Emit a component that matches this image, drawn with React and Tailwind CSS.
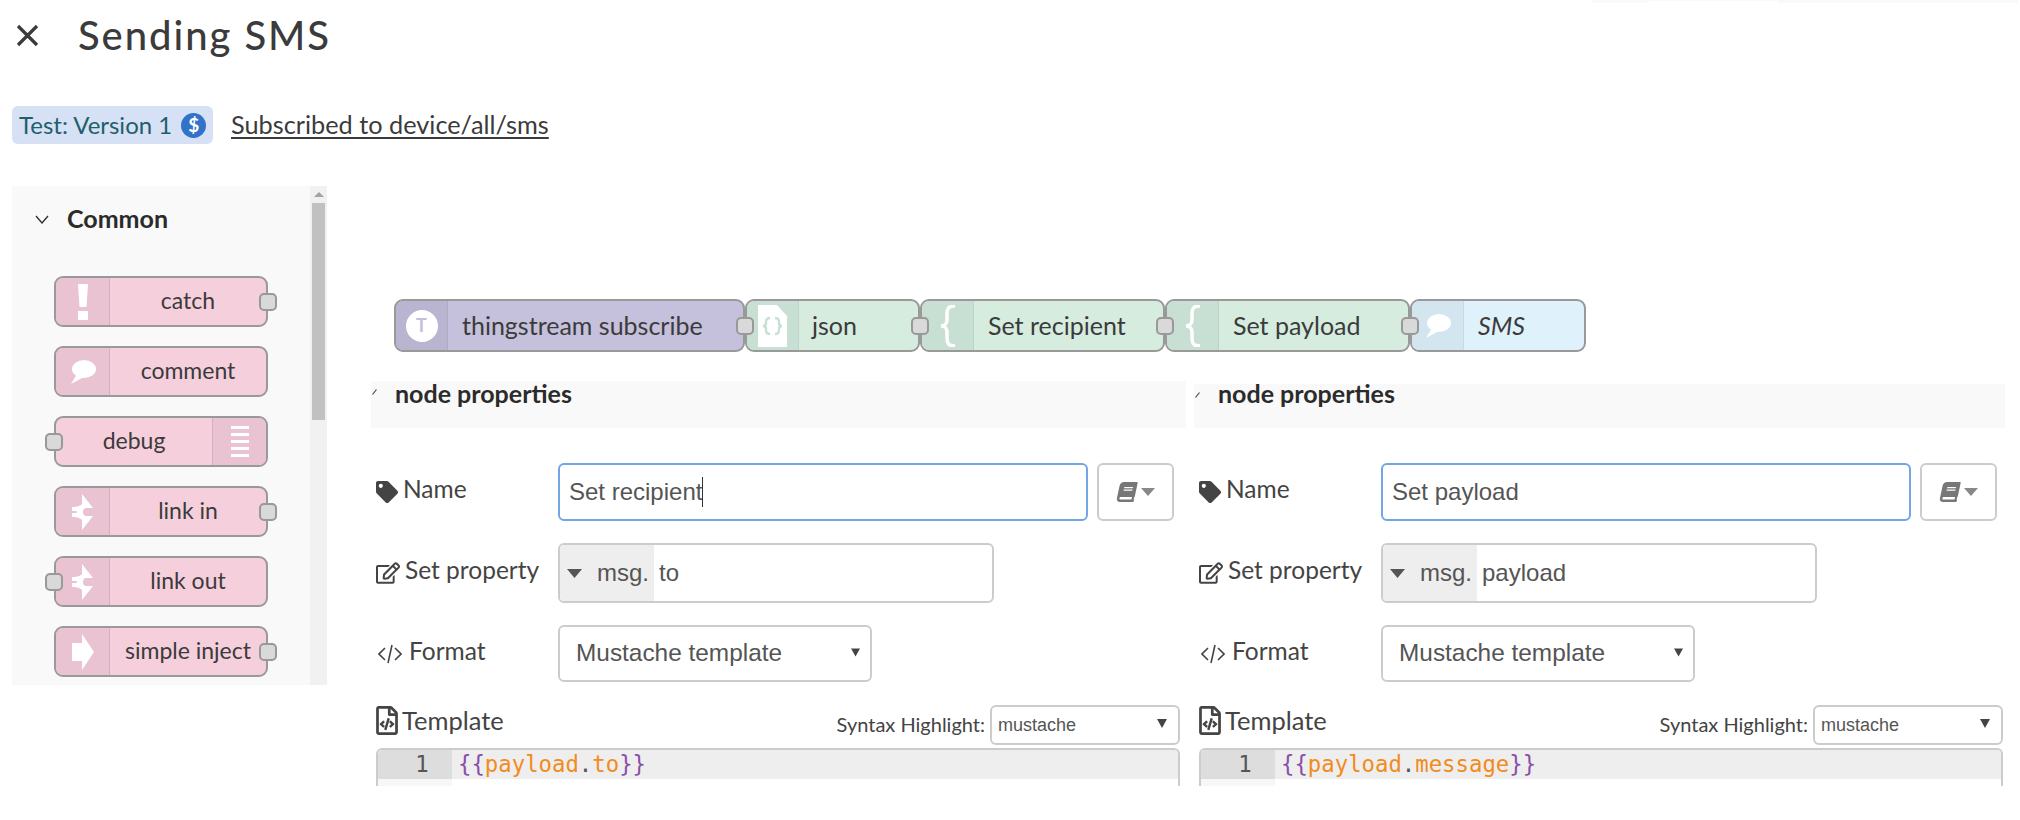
import React from 'react'
import { FaTag, FaRegEdit, FaBook, FaRegFileCode } from 'react-icons/fa'

// Iconos de los nodos
const IconAlert = () => (
  <svg width='16' height='36' viewBox='0 0 16 36'>
    <path d='M3 0h10l-1.5 23h-7z' fill='#fff' />
    <rect x='3' y='27' width='10' height='9' fill='#fff' />
  </svg>
)
const IconBubble = ({ w = 26 }) => (
  <svg width={w} height={w} viewBox='0 0 26 26'>
    <ellipse cx='14' cy='10' rx='12' ry='9' fill='#fff' />
    <path d='M7 15 L1 25 L14 18z' fill='#fff' />
  </svg>
)
const IconLines = () => (
  <svg width='18' height='32' viewBox='0 0 18 32' fill='#fff'>
    <rect y='0' width='18' height='3' />
    <rect y='7' width='18' height='3' />
    <rect y='14' width='18' height='3' />
    <rect y='21' width='18' height='3' />
    <rect y='28' width='18' height='3' />
  </svg>
)
const IconLink = () => (
  <svg width='22' height='36' viewBox='0 0 22 36'>
    <path d='M10 0 L21 14 H14 C12 14 11 16 11 18 C11 20 12 22 14 22 H21 L10 36 V26 C8 24 6 23 0 23 V19 H3 C6 19 6 17 3 17 H0 V13 C6 13 8 12 10 10z' fill='#fff' />
  </svg>
)
const IconArrow = () => (
  <svg width='22' height='36' viewBox='0 0 22 36'>
    <path d='M0 9 H10 V0 L22 18 L10 36 V27 H0z' fill='#fff' />
  </svg>
)
const IconBrace = () => (
  <svg width='16' height='42' viewBox='0 0 16 42' fill='none' stroke='#fff' strokeWidth='3.5'>
    <path d='M15 1 C8 1 7 4 7 9 V15 C7 18 5 21 1 21 C5 21 7 24 7 27 V33 C7 38 8 41 15 41' />
  </svg>
)
const IconJson = () => (
  <svg width='29' height='42' viewBox='0 0 29 42'>
    <path d='M0 0 H19 L29 11 V42 H0z' fill='#fff' />
    <path d='M12 13 C8 13 8 15 8 18 C8 20 7 21 5 21 C7 21 8 22 8 24 C8 27 8 29 12 29 M17 13 C21 13 21 15 21 18 C21 20 22 21 24 21 C22 21 21 22 21 24 C21 27 21 29 17 29' fill='none' stroke='#c7e0d3' strokeWidth='2.4' />
  </svg>
)
const IconT = () => (
  <div className='w-[32px] h-[32px] rounded-full bg-white flex items-center justify-center text-[18px] font-bold text-[#c3bfd9]'>T</div>
)
const IconCode = () => (
  <svg width='24' height='20' viewBox='0 0 24 20' fill='none' stroke='#444' strokeWidth='1.6'>
    <path d='M7 4 L1 10 L7 16 M17 4 L23 10 L17 16 M14 1 L10 19' />
  </svg>
)

function Port({ side }) {
  return (
    <div
      className={`absolute top-1/2 -translate-y-1/2 w-[18px] h-[18px] bg-[#d9d9d9] border-2 border-[#999] rounded-[5px] z-10 ${
        side === 'left' ? 'left-[-11px]' : 'right-[-11px]'
      }`}
    />
  )
}

function PaletteNode({ label, icon, right, inPort, outPort }) {
  const panel = (
    <div className={`w-[54px] h-full flex items-center justify-center bg-[#e9c3d2] ${right ? 'border-l' : 'border-r'} border-[#d6b0c0]`}>
      {icon}
    </div>
  )
  return (
    <div className='relative w-[214px] h-[51px] bg-[#f6cfdd] border-2 border-[#999] rounded-[9px] flex items-center text-[23px] text-[#3b3b3b]'>
      {!right && <div className='h-full rounded-l-[7px] overflow-hidden'>{panel}</div>}
      <div className='flex-1 text-center whitespace-nowrap pb-[2px]'>{label}</div>
      {right && <div className='h-full rounded-r-[7px] overflow-hidden'>{panel}</div>}
      {inPort && <Port side='left' />}
      {outPort && <Port side='right' />}
    </div>
  )
}

function FlowNode({ label, icon, width, bg, panelBg, panelW = 52, italic, inPort, outPort, pad = 14 }) {
  return (
    <div
      className={`relative h-[53px] border-2 border-[#999] rounded-[9px] flex items-center text-[25px] text-[#3b3b3b] ${bg} ${width}`}
    >
      <div className={`h-full flex items-center justify-center rounded-l-[7px] border-r border-black/5 ${panelBg}`} style={{ width: panelW }}>
        {icon}
      </div>
      <div className={`whitespace-nowrap ${italic ? 'italic' : ''}`} style={{ paddingLeft: pad }}>{label}</div>
      {inPort && <Port side='left' />}
      {outPort && <Port side='right' />}
    </div>
  )
}

function Label({ icon, children, gap = 'gap-[5px]' }) {
  return (
    <div className={`w-[182px] flex items-center text-[24.5px] text-[#444] whitespace-nowrap ${gap}`}>
      {icon}
      <span className='pb-[5px]'>{children}</span>
    </div>
  )
}

function Select({ width, height, pad, text, size, arrowW, arrowR }) {
  return (
    <div className={`relative ${width} ${height}`}>
      <select
        defaultValue='mustache'
        className={`w-full h-full appearance-none border-2 border-[#ccc] rounded-[6px] bg-white text-[#555] font-["Liberation_Sans",sans-serif] ${pad} ${size}`}
      >
        <option value='mustache'>{text}</option>
      </select>
      <svg className={`absolute top-1/2 -translate-y-[6px] pointer-events-none ${arrowR}`} width={arrowW} height='9' viewBox='0 0 10 9'>
        <path d='M0 0 H10 L5 9z' fill='#444' />
      </svg>
    </div>
  )
}

function Props({ name, caret, prop, code, headerClass, headerTitleClass }) {
  return (
    <div className='flex flex-col'>
      <div className='h-[47px] flex flex-col justify-end'>
        <div className={`bg-[#f9f9f9] flex items-start font-bold text-[25px] leading-[24px] text-[#2b2b2b] ${headerClass}`}>
          <svg className={`ml-[1px] mt-[8px] ${headerTitleClass}`} width='5' height='6' viewBox='0 0 5 6' fill='none' stroke='#444' strokeWidth='1.2'>
            <path d='M0.5 5.5 L4.5 0.5' />
          </svg>
          <span className={`pl-[18px] ${headerTitleClass}`}>node properties</span>
        </div>
      </div>

      <div className='pl-[5px] flex flex-col font-["Liberation_Sans",sans-serif]'>
        <div className='flex items-center mt-[35px] font-["Lato",sans-serif]'>
          <Label icon={<FaTag size={22} className='text-[#444]' />}>Name</Label>
          <div className='w-[530px] h-[58px] border-2 border-[#72a5e5] rounded-[6px] flex items-center pl-[9px] text-[24px] text-[#555] font-["Liberation_Sans",sans-serif]'>
            {name}
            {caret && <span className='w-px h-[30px] bg-[#333]' />}
          </div>
          <div className='ml-[9px] w-[77px] h-[58px] border-2 border-[#ccc] rounded-[6px] flex items-center justify-center gap-[4px] text-[#777]'>
            <FaBook size={20} className='-skew-x-12' />
            <svg width='14' height='8' viewBox='0 0 14 8'><path d='M0 0 H14 L7 8z' fill='#888' /></svg>
          </div>
        </div>

        <div className='flex items-center mt-[22px] font-["Lato",sans-serif]'>
          <Label icon={<FaRegEdit size={24} className='text-[#444]' />}>Set property</Label>
          <div className='w-[436px] h-[60px] border-2 border-[#ccc] rounded-[6px] flex items-center text-[24px] text-[#555] overflow-hidden font-["Liberation_Sans",sans-serif]'>
            <div className='w-[94px] h-full bg-[#eee] flex items-center pl-[7px] gap-[15px] shrink-0'>
              <svg width='15' height='9' viewBox='0 0 15 9'><path d='M0 0 H15 L7.5 9z' fill='#555' /></svg>
              <span>msg.</span>
            </div>
            <span className='pl-[5px]'>{prop}</span>
          </div>
        </div>

        <div className='flex items-center mt-[22px] font-["Lato",sans-serif]'>
          <Label icon={<IconCode />} gap='gap-[7px] pl-[2px]'>Format</Label>
          <Select width='w-[314px]' height='h-[57px]' pad='pl-[16px]' size='text-[24.4px]' text='Mustache template' arrowW={9} arrowR='right-[12px]' />
        </div>

        <div className='flex items-center justify-between w-[804px] h-[40px] mt-[23px] font-["Lato",sans-serif]'>
          <div className='flex items-center gap-[4px] text-[25.5px] leading-[29px] text-[#444] pb-[9px]'>
            <FaRegFileCode className='text-[#444] w-[22px] h-[29px]' />
            <span>Template</span>
          </div>
          <div className='flex items-center gap-[5px] text-[20px] leading-[30px] text-[#444]'>
            <span className='pb-[3px]'>Syntax Highlight:</span>
            <Select width='w-[190px]' height='h-[40px]' pad='pl-[6px]' size='text-[18px]' text='mustache' arrowW={10} arrowR='right-[13px]' />
          </div>
        </div>

        <div className='w-[804px] h-[38px] mt-[3px] border-x-2 border-t-2 border-[#ccc] rounded-t-[6px] flex overflow-hidden font-["DejaVu_Sans_Mono",monospace] text-[22.3px] leading-[29px]'>
          <div className='w-[74px] h-full bg-[#f7f7f7] shrink-0'>
            <div className='h-[29px] bg-[#ddd] text-center pl-[14px] text-[#555]'>1</div>
          </div>
          <div className='flex-1'>
            <div className='h-[29px] bg-[#eee] pl-[6px] whitespace-nowrap text-[#f28b20]'>
              <span className='text-[#8a4fa8]'>{'{{'}</span>
              {code[0]}
              <span className='text-[#555]'>.</span>
              {code[1]}
              <span className='text-[#8a4fa8]'>{'}}'}</span>
            </div>
          </div>
        </div>
      </div>
    </div>
  )
}

export default function App() {
  return (
    <div className='relative w-[2020px] h-[820px] overflow-hidden bg-white font-["Lato",sans-serif] text-[#3b3b3b]'>
      {/* Cabecera */}
      <div className='h-[70px] flex items-center pl-[16px] gap-[39px]'>
        <svg width='23' height='23' viewBox='0 0 23 23' stroke='#3b3b3b' strokeWidth='3.2'>
          <path d='M2 2 L21 21 M21 2 L2 21' />
        </svg>
        <h1 className='text-[40px] tracking-[1.95px] font-medium text-[#3b3b3b]'>Sending SMS</h1>
      </div>

      <div className='mt-[36px] h-[38px] ml-[12px] flex items-center gap-[18px]'>
        <div className='h-full w-[201px] pl-[7px] bg-[#d6e1f5] rounded-[6px] flex items-center gap-[9px] text-[24px] text-[#1f5f6b]'>
          <span className='whitespace-nowrap'>Test: Version 1</span>
          <div className='w-[25px] h-[25px] shrink-0 rounded-full bg-[#3272c8] text-white flex items-center justify-center text-[19px] font-bold'>$</div>
        </div>
        <a className='underline underline-offset-[3px] decoration-2 text-[25.3px] text-[#3b3b3b] whitespace-nowrap'>Subscribed to device/all/sms</a>
      </div>

      <div className='flex mt-[42px] ml-[12px]'>
        {/* Paleta */}
        <div className='w-[315px] h-[499px] bg-[#f9f9f9] flex shrink-0'>
          <div className='w-[298px]'>
            <div className='flex items-center h-[66px] pl-[23px] gap-[18px] font-bold text-[25px] text-[#2b2b2b]'>
              <svg width='14' height='9' viewBox='0 0 14 9' fill='none' stroke='#333' strokeWidth='1.4'><path d='M1 1 L7 8 L13 1' /></svg>
              Common
            </div>
            <div className='pl-[42px] pt-[24px] flex flex-col gap-[19px]'>
              <PaletteNode label='catch' icon={<IconAlert />} outPort />
              <PaletteNode label='comment' icon={<IconBubble />} />
              <PaletteNode label='debug' icon={<IconLines />} right inPort />
              <PaletteNode label='link in' icon={<IconLink />} outPort />
              <PaletteNode label='link out' icon={<IconLink />} inPort />
              <PaletteNode label='simple inject' icon={<IconArrow />} outPort />
            </div>
          </div>
          <div className='w-[17px] bg-[#f1f1f1] flex flex-col items-center'>
            <svg className='mt-[6px] mb-[6px]' width='10' height='5' viewBox='0 0 10 5'><path d='M5 0 L10 5 H0z' fill='#a3a3a3' /></svg>
            <div className='w-[13px] h-[217px] bg-[#c1c1c1]' />
          </div>
        </div>

        {/* Flujo y propiedades */}
        <div className='ml-[44px] flex-1'>
          <div className='flex mt-[113px] ml-[23px]'>
            <FlowNode label='thingstream subscribe' icon={<IconT />} width='w-[351px]' bg='bg-[#c5c0db]' panelBg='bg-[#b9b4d0]' outPort />
            <FlowNode label='json' icon={<IconJson />} width='w-[175px]' bg='bg-[#d5ecdf]' panelBg='bg-[#c7e0d3]' pad={13} outPort />
            <FlowNode label='Set recipient' icon={<IconBrace />} width='w-[245px]' bg='bg-[#d5ecdf]' panelBg='bg-[#c7e0d3]' outPort />
            <FlowNode label='Set payload' icon={<IconBrace />} width='w-[245px]' bg='bg-[#d5ecdf]' panelBg='bg-[#c7e0d3]' outPort />
            <FlowNode label='SMS' icon={<IconBubble />} width='w-[176px]' bg='bg-[#dff1fa]' panelBg='bg-[#d3e5ee]' italic />
          </div>

          <div className='flex gap-[8px] mt-[29px]'>
            <div className='w-[815px]'>
              <Props name='Set recipient' caret prop='to' code={['payload', 'to']} headerClass='h-[47px]' headerTitleClass='' />
            </div>
            <div className='w-[811px]'>
              <Props name='Set payload' prop='payload' code={['payload', 'message']} headerClass='h-[44px]' headerTitleClass='-mt-[3px]' />
            </div>
          </div>
        </div>
      </div>

      {/* Resto de barra superior recortada */}
      <div className='absolute top-0 left-[1592px] w-[56px] h-[3px] bg-[#f9f9f9]' />
      <div className='absolute top-0 left-[1648px] w-[130px] h-px bg-[#f9f9f9]' />
      <div className='absolute top-0 left-[1778px] w-[240px] h-[3px] bg-[#f9f9f9]' />
    </div>
  )
}
